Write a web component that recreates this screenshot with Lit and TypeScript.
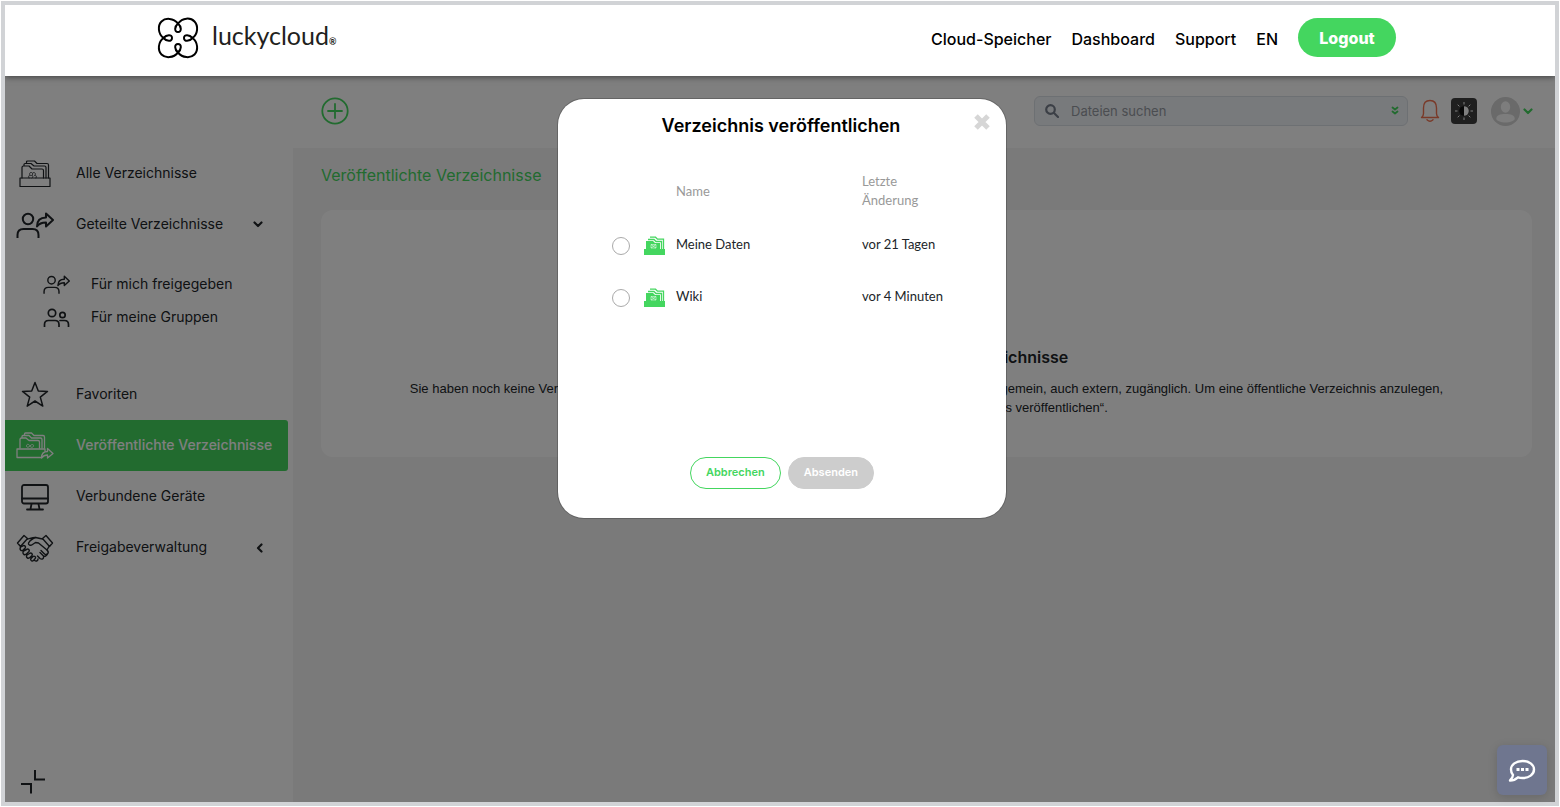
import { LitElement, html, css, svg } from "lit";
import { customElement, state } from "lit/decorators.js";
import { classMap } from "lit/directives/class-map.js";

const icon = (w: number, h: number, body: unknown, sw = 1.5) =>
  html`<svg width=${w} height=${h} viewBox="0 0 ${w} ${h}" fill="none" stroke="currentColor" stroke-width=${sw} stroke-linejoin="round" stroke-linecap="round" aria-hidden="true">${body}</svg>`;

const folders = icon(32, 28, svg`
  <rect x="1" y="18" width="30" height="8.5"/>
  <path d="M3 18V7.500q0-1.500 1.500-1.500h5.500l3 3h10q1.500 0 1.500 1.500V18"/>
  <path d="M5 5.500V4.500q0-1 1-1h6l3 2.500h10.500q1.500 0 1.500 1.500V18"/>
  <path d="M7.500 3V2q0-1 1-1h7l2.500 2.500h10q1.500 0 1.500 1.500V18"/>
  <path d="M10 18c-1-2 0-3 1.500-2.500-1.500-1-1-3.500 1-3 1.500 0 1.500 2.500 0 3 1.500-.5 2 1.500.5 2.500M17 18c1-2 0-3-1.500-2.500 1.500-1 1-3.500-1-3" stroke-width="0.8"/>`, 1.2);

const publicFolders = icon(38, 28, svg`
  <path d="M1 17v8.500h24M1 17h28v2"/>
  <path d="M4 16V7.500q0-1.500 1.500-1.500h4.500l3 2.500h9q1.500 0 1.500 1.500v6"/>
  <path d="M6 5.500V4.500q0-1 1-1h6l2.500 2.500h9q1.500 0 1.500 1.500V16"/>
  <path d="M8.500 3V2q0-1 1-1h6l2.500 2.500h9q1.500 0 1.500 1.500V16"/>
  <path d="M14 14c-1.500 2-4 1.500-3.500-.5s3-1 3.500.5 3 2 3.500 0-2.500-2-3.500 0" stroke-width="0.900"/>
  <path d="M25.500 26c0-4.500 2.500-6.500 6-6.500v-3l5.500 5-5.500 4.500v-3c-3 0-4.500 1-6 3z"/>`, 1.3);

const personShare = (w: number, h: number) => html`<svg width=${w} height=${h} viewBox="0 0 38 26" fill="none" stroke="currentColor" stroke-width="2" stroke-linejoin="round" aria-hidden="true">
  <circle cx="12" cy="7" r="5.200"/><path d="M1.500 26v-3q0-6 6-6h9q6 0 6 6v3"/>
  <path d="M21 14.500c0-6.500 4-9 9-9V1.500l7 6.500-7 6.500v-4c-4.500 0-7 1-9 4z"/></svg>`;

const people = icon(27, 19, svg`
  <circle cx="9" cy="5" r="3.700"/><circle cx="19.500" cy="7" r="2.700"/>
  <path d="M1.500 19v-2.500q0-4 4-4h6.500q4 0 4 4V19M17 12.500h4.500q4 0 4 4V19"/>`, 1.7);

const star = icon(28, 27, svg`<path d="M14 1.500l3.300 8.500 9.200.4-7.200 5.700 2.500 9-7.800-5.100-7.800 5.100 2.500-9L1.500 10.400l9.200-.4z"/>`);

const monitor = icon(28, 28, svg`<rect x="1" y="2" width="26" height="18.500" rx="2"/><path d="M1 15.500h26M10.500 21l-1 5M17.500 21l1 5M6 26.500h16"/>`, 1.8);

const handshake = icon(38, 28, svg`
  <path d="M8 1.500L1.500 9l3 3.500 7-8z"/><path d="M30 1.500L36.500 9l-3 3.500-7-8z"/>
  <path d="M11 5c3-.5 5-1.500 8-1.500s5 1.500 8 1.500M20 3.500c-4 1-6 3-7.500 5.500-.5 2 2 3 4 1.500l3-2 3 .5 8.500 7c1 1 2 2.500.5 4-1 1-2.500.5-3.500-.5l-3-3"/>
  <path d="M5 12.500c-1 1.500-1.500 2.500-.5 3.500s2 .8 3.200-.5l1.500-1.500c1-1.500-1-3.500-2.500-2zM7.500 17c-1 1.500-.5 3 .5 3.500s2 0 3-1l2-2c1-1.500-1-3.500-2.500-2zM11 21c-1 1.200-.5 2.500.5 3s2 0 3-1l1.500-1.500c1-1.500-1-3.500-2.500-2zM15 24.500c-.8 1 0 2.200 1 2.500s3-2 3.500-3-1.200-2.500-2.500-1.500z"/>
  <path d="M18.500 26.500c2 1.200 3.500 0 3.500-1.500M21.500 22l2.500 2.500c2 1.500 4 0 3.500-2M24 18.500l3.500 3.500c1.500.8 3.500-.5 3.500-2M33 12.500l-2 3.500"/>`, 1.4);

const chevronDown = icon(10, 7, svg`<path d="M1.500 1.500L5 5l3.500-3.500"/>`, 2.2);
const chevronLeft = icon(7, 10, svg`<path d="M5.500 1.500L2 5l3.500 3.500"/>`, 2.2);

const clover = icon(42, 42, svg`<path transform="translate(.5 .5)" d="M20.500 6C24 9 24.500 14.500 20.500 14.500S17 9 20.500 6C25 0 33-.3 37 4s3.500 12.500-2 16.500C32 24 26.500 24.500 26.500 20.500S32 17 35 20.500c5.500 4 6 12.500 2 16.500s-12 3.500-16.500-2C17 32 16.500 26.500 20.500 26.500S24 32 20.500 35C16 40.500 8 41 4 37S.5 24.500 6 20.500C9 17 14.500 16.500 14.500 20.500S9 24 6 20.500C.5 16.500 0 8 4 4s12-3.500 16.500 2z"/>`, 2);

const greenFolders = html`<svg width="22" height="19" viewBox="0 0 22 19" aria-hidden="true">
  <path d="M0 13h21v6H0z" fill="#44d65f"/><path d="M2 5h7l2 2h5v6H2z" fill="#44d65f"/>
  <path d="M4 3.500h6l2 2h5.500V13M6 1.200h5.500l2 2h6V13" fill="none" stroke="#44d65f" stroke-width="1.300"/>
  <path d="M7 8.500h5V12H7zM7 8.500l5 3.500M12 8.500L7 12" fill="none" stroke="#fff" stroke-width=".5"/></svg>`;

const ROWS = [
  { id: "meine-daten", name: "Meine Daten", changed: "vor 21 Tagen" },
  { id: "wiki", name: "Wiki", changed: "vor 4 Minuten" },
];

@customElement("app-root")
export class AppRoot extends LitElement {
  @state() private selected = "";
  @state() private open = true;

  static styles = css`
    :host { display: block; box-sizing: border-box; height: 100vh; padding: 1px; background: #fff;
      font-family: Inter, "Open Sans", sans-serif; font-size: 14px; color: #212529; }
    *, *::before, *::after { box-sizing: border-box; }
    svg { display: block; flex: none; }
    a { color: inherit; text-decoration: none; }
    button { font: inherit; cursor: pointer; border: 0; background: none; padding: 0; color: inherit; }
    .frame { position: relative; height: 100%; border: 4px solid #d1d3d6; display: flex; flex-direction: column; }
    .header { position: relative; z-index: 3; height: 71px; flex: none; background: #fff; display: flex; align-items: center;
      justify-content: space-between; padding: 0 159px 6px 152px; box-shadow: 0 1px 6px rgba(0, 0, 0, .5); clip-path: inset(0 0 -10px 0); color: #000; }
    .brand { display: flex; align-items: center; gap: 13px; font: 25px/32px Lato, sans-serif; color: #231f20; }
    .brand svg { color: #000; }
    .brand span { padding-top: 2px; }
    .brand .reg { font-size: 9px; font-weight: 700; }
    .nav { display: flex; align-items: center; gap: 20px; font-size: 16px; font-weight: 500; }
    .nav a { padding-top: 2px; }
    .logout { height: 39px; width: 98px; border-radius: 20px; background: #44d65f; color: #fff; font-weight: 800; }
    .body { flex: 1; min-height: 0; display: grid; grid-template-columns: 288px 1fr; grid-template-rows: 72px 1fr; background: #fff; }
    .side { grid-row: 1 / 3; display: flex; flex-direction: column; justify-content: space-between; padding-top: 72px; }
    .side ul { list-style: none; margin: 0; padding: 0; }
    .item { display: grid; grid-template-columns: 60px 1fr auto; column-gap: 11px; align-items: center; height: 51px;
      width: 283px; padding-right: 25px; white-space: nowrap; }
    .item svg:first-child { justify-self: center; }
    .item span { padding-bottom: 2px; }
    .item.active { background: #44d65f; color: #fff; font-weight: 500; border-radius: 0 3px 3px 0; padding-right: 8px; }
    .side .sub { padding: 18px 0 35px 38px; }
    .sub .item { grid-template-columns: 26px 1fr; column-gap: 22px; height: 33px; width: 245px; padding-right: 0; }
    .collapse { width: 24px; margin: 0 0 8px 16px; }
    .topbar { display: flex; align-items: center; justify-content: space-between; padding: 0 22px 2px 28px; }
    .add { color: #44d65f; }
    .tools { display: flex; align-items: center; }
    .search { display: flex; align-items: center; width: 374px; height: 30px; padding: 0 8px 0 10px; gap: 12px; border: 1px solid #dbe0e6;
      border-radius: 6px; background: #f1f4f8; color: #777f8c; }
    .search input { flex: 1; min-width: 0; border: 0; outline: 0; background: none; font: 13px Inter, sans-serif; padding: 0; }
    .search input::placeholder { color: #969ba3; opacity: 1; }
    .green { color: #44d65f; }
    .bell { color: #f27351; margin-left: 12px; }
    .theme { width: 26px; height: 26px; margin-left: 11px; border-radius: 4px; background: #3f3f3f; color: #fff; display: grid; place-items: center; }
    .user { display: flex; align-items: center; gap: 3px; margin-left: 14px; }
    .main { background: #f5f5f5; padding: 17px 23px 0 28px; }
    .main h1 { margin: 0 0 24px; font-size: 16px; line-height: 21px; font-weight: 400; color: #44d65f; }
    .empty { background: #fff; border-radius: 12px; min-height: 247px; padding: 136px 40px 38px; text-align: center; }
    .empty h2 { margin: 0 0 11px; font-size: 16px; line-height: 22px; font-weight: 600; }
    .empty p { margin: 0; font: 13px/19px "Liberation Sans", sans-serif; }
    .overlay { position: absolute; inset: 71px 0 0; z-index: 2; background: rgba(0, 0, 0, .5); display: flex; justify-content: center;
      align-items: flex-start; padding: 23px 0 0 4px; }
    .modal { position: relative; width: 448px; min-height: 419px; padding: 15px 28px 29px 46px; background: #fff; border-radius: 26px; box-shadow: 0 0 0 1px rgba(0, 0, 0, .2);
      display: flex; flex-direction: column; color: #212529; }
    .modal h2 { margin: 0 20px 26px 0; text-align: center; font-size: 18px; line-height: 24px; font-weight: 600; color: #000; }
    .close { position: absolute; top: 15px; right: 16px; color: #d6d6d6; }
    table { border-collapse: collapse; table-layout: fixed; width: 100%; font: 13px/19px Lato, sans-serif; }
    th, td { padding: 0; text-align: left; }
    th { font-weight: 400; color: #999; height: 54px; }
    td { height: 52px; }
    td svg { margin-top: 3px; }
    .c-radio { width: 40px; } .c-icon { width: 32px; } .c-name { width: 186px; }
    .c-date span { display: block; width: 62px; }
    .pick { appearance: none; display: block; width: 18px; height: 18px; margin: 3px 0 0 8px; border: 1px solid #aaa; border-radius: 50%; background: #fff; }
    .pick:checked { border: 5px solid #44d65f; }
    .actions { margin: auto 0 0; padding-right: 18px; display: flex; justify-content: center; gap: 7px; font-size: 11px; font-weight: 600; }
    .actions button { height: 32px; padding: 0 15px 2px; border-radius: 16px; border: 1px solid #44d65f; color: #44d65f; }
    .actions .send { background: #44d65f; color: #fff; }
    .actions .send:disabled { background: #cdcdcd; border-color: #cdcdcd; cursor: default; }
    .chat { position: absolute; right: 8px; bottom: 7px; z-index: 4; width: 50px; height: 50px; padding-top: 2px; border-radius: 6px; background: #6f768f; color: #fff;
      display: grid; place-items: center; box-shadow: 0 2px 10px rgba(0, 0, 0, .15); }
  `;

  private item(ic: unknown, label: string, end: unknown = "", active = false) {
    return html`<a href="#" class=${classMap({ item: true, active })}>${ic}<span>${label}</span>${end}</a>`;
  }

  private modal() {
    return html`<div class="overlay"><section class="modal" role="dialog" aria-labelledby="dlg">
      <h2 id="dlg">Verzeichnis veröffentlichen</h2>
      <button class="close" aria-label="Schließen" @click=${() => (this.open = false)}>
        <svg width="16" height="16" viewBox="0 0 16 16" stroke="currentColor" stroke-width="5"><path d="M2 2l12 12M14 2L2 14"/></svg></button>
      <table>
        <colgroup><col class="c-radio"><col class="c-icon"><col class="c-name"><col></colgroup>
        <thead><tr><th></th><th></th><th>Name</th><th class="c-date"><span>Letzte Änderung</span></th></tr></thead>
        <tbody>${ROWS.map(r => html`<tr>
          <td><input class="pick" type="radio" name="dir" id=${r.id} .checked=${this.selected === r.id} @change=${() => (this.selected = r.id)}></td>
          <td>${greenFolders}</td><td><label for=${r.id}>${r.name}</label></td><td>${r.changed}</td></tr>`)}</tbody>
      </table>
      <div class="actions"><button @click=${() => (this.open = false)}>Abbrechen</button><button class="send" ?disabled=${!this.selected}>Absenden</button></div>
    </section></div>`;
  }

  render() {
    return html`<div class="frame">
      <header class="header">
        <a class="brand" href="#">${clover}<span>luckycloud<span class="reg">®</span></span></a>
        <nav class="nav"><a href="#">Cloud-Speicher</a><a href="#">Dashboard</a><a href="#">Support</a><a href="#">EN</a><button class="logout">Logout</button></nav>
      </header>
      <div class="body">
        <aside class="side">
          <ul>
            <li>${this.item(folders, "Alle Verzeichnisse")}</li>
            <li>${this.item(personShare(38, 26), "Geteilte Verzeichnisse", chevronDown)}
              <ul class="sub"><li>${this.item(personShare(27, 19), "Für mich freigegeben")}</li><li>${this.item(people, "Für meine Gruppen")}</li></ul></li>
            <li>${this.item(star, "Favoriten")}</li>
            <li>${this.item(publicFolders, "Veröffentlichte Verzeichnisse", "", true)}</li>
            <li>${this.item(monitor, "Verbundene Geräte")}</li>
            <li>${this.item(handshake, "Freigabeverwaltung", chevronLeft)}</li>
          </ul>
          <button class="collapse" aria-label="Seitenleiste einklappen">${icon(24, 25, svg`<path d="M14 1v9.500h10M0 15h10v9.500" stroke-linejoin="miter" stroke-linecap="butt"/>`, 2)}</button>
        </aside>
        <div class="topbar">
          <button class="add" aria-label="Neu">${icon(28, 28, svg`<circle cx="14" cy="14" r="12.700"/><path d="M14 7v14M7 14h14"/>`, 1.8)}</button>
          <div class="tools">
            <label class="search">${icon(14, 14, svg`<circle cx="5.500" cy="5.500" r="4.300"/><path d="M9 9l4 4"/>`, 2.2)}
              <input type="text" placeholder="Dateien suchen" aria-label="Dateien suchen">
              <span class="green">${icon(8, 10, svg`<path d="M1.500 1.500L4 3.500l2.500-2M1.500 5.500L4 7.500l2.500-2"/>`, 1.8)}</span></label>
            <button class="bell" aria-label="Benachrichtigungen">${icon(20, 24, svg`<path d="M1.500 18.500q2-1.500 2-4V9q0-7.500 6.500-7.500T16.500 9v5.500q0 2.500 2 4zM7 20.800q3 2.800 6 0"/>`, 1.4)}</button>
            <button class="theme" aria-label="Farbschema wechseln">
              <svg width="18" height="18" viewBox="0 0 18 18"><circle cx="9" cy="9" r="4.800" fill="#111"/><path d="M9 4.200a4.800 4.800 0 010 9.600z" fill="#fff"/><path d="M9 0v2.500M9 15.500V18M0 9h2.500M15.500 9H18M2.700 2.700l1.700 1.700M13.600 13.600l1.700 1.700M15.300 2.700l-1.700 1.700M4.400 13.600l-1.700 1.700" stroke="#fff"/></svg></button>
            <button class="user" aria-label="Konto"><svg width="29" height="29" viewBox="0 0 29 29"><circle cx="14.500" cy="14.500" r="14.500" fill="#d4d4d4"/><ellipse cx="14.500" cy="10" rx="4.700" ry="5.800" fill="#fafafa"/><path d="M5.200 22c0-4 4-5 9.300-5s9.300 1 9.300 5c-1 2-5 3.500-9.300 3.500S6.200 24 5.200 22z" fill="#fafafa"/></svg>
              <span class="green">${chevronDown}</span></button>
          </div>
        </div>
        <main class="main">
          <h1>Veröffentlichte Verzeichnisse</h1>
          <section class="empty">
            <h2>Keine veröffentlichten Verzeichnisse</h2>
            <p>Sie haben noch keine Verzeichnisse veröffentlicht. Ein veröffentlichtes Verzeichnis ist für alle Nutzer allgemein, auch extern, zugänglich. Um eine öffentliche Verzeichnis anzulegen,<br>klicken Sie auf Plus und dann auf „Verzeichnis veröffentlichen“.</p>
          </section>
        </main>
      </div>
      ${this.open ? this.modal() : ""}
      <button class="chat" aria-label="Chat">${icon(28, 24, svg`<path d="M14.500 2C21 2 26 5.500 26 10.500S21 19 14.500 19q-2.500 0-4.500-.7Q6.500 21.500 2 21.500q2.800-2.500 3-5.500-2-2.200-2-5.500C3 5.500 8 2 14.500 2z"/><path d="M8.500 10.500h3M13 10.500h3M17.500 10.500h3" stroke-width="3" stroke-linecap="butt"/>`, 2.4)}</button>
    </div>`;
  }
}
